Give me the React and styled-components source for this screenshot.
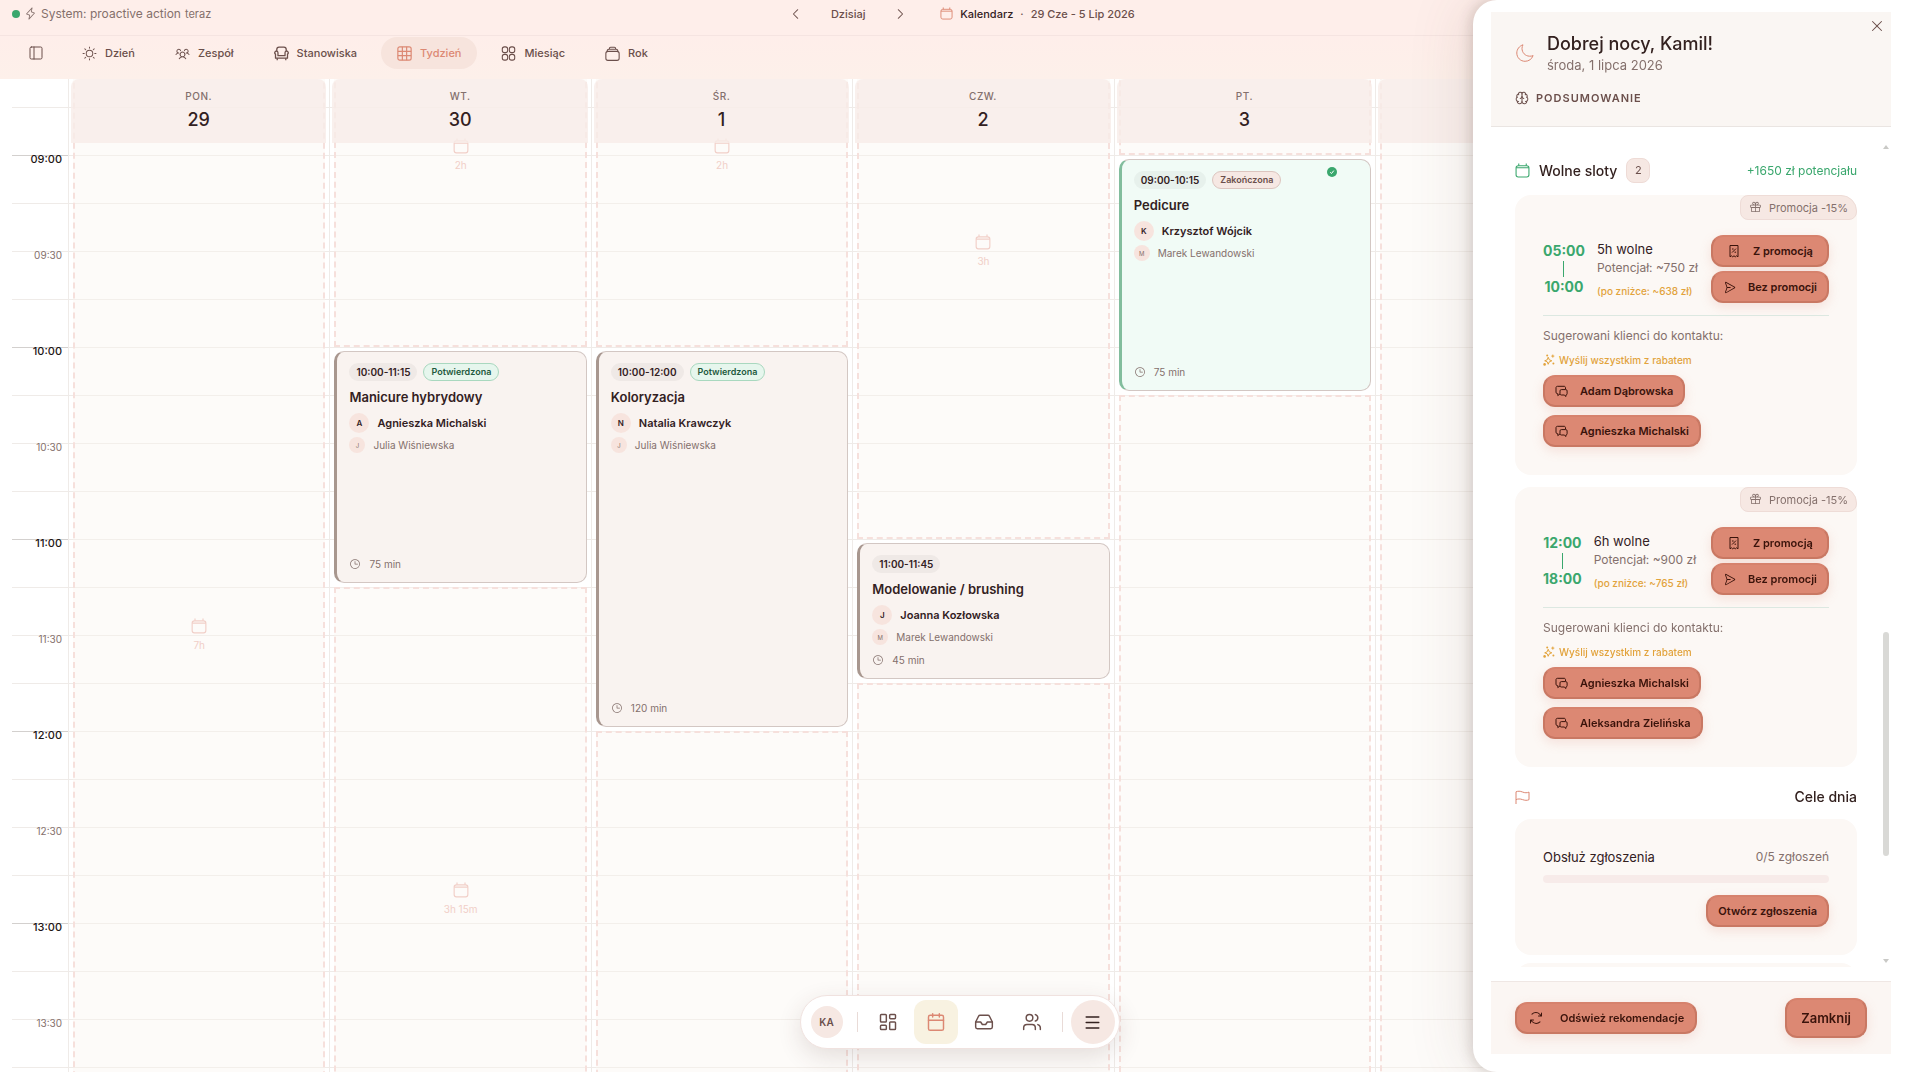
import React from 'react';
import styled, { createGlobalStyle, css } from 'styled-components';
import {
  PiArrowsClockwise,
  PiCaretLeft,
  PiCaretRight,
  PiClock,
  PiGift,
  PiLightning,
  PiPaperPlaneRight,
  PiSun,
  PiUsersThree,
  PiX,
} from 'react-icons/pi';
import {
  Brain,
  Calendar,
  Inbox,
  LayoutDashboard,
  Menu,
  PanelLeft,
  Users,
} from 'lucide-react';

const INK = '#33211f';
const BROWN = '#6b4f4b';
const MUTED = '#84706c';
const CORAL = '#dc8873';
const CORAL_EDGE = '#c97863';
const BLUSH = '#f6e8e3';
const GREEN = '#3aa76d';
const AMBER = '#e2a33c';
const LINE = '#efebe8';
const DASH = '#f6e0dc';

const HOUR = 192;
const DAY_START = 8;
const DAY_END = 14;

const days = [
  {
    name: 'PON.',
    number: 29,
    items: [{ free: '7h', hours: 7 }],
  },
  {
    name: 'WT.',
    number: 30,
    items: [
      { free: '2h', hours: 2 },
      {
        hours: 1.25,
        time: '10:00-11:15',
        status: 'Potwierdzona',
        title: 'Manicure hybrydowy',
        client: 'Agnieszka Michalski',
        staff: 'Julia Wiśniewska',
        duration: '75 min',
      },
      { free: '3h 15m', hours: 3.25 },
    ],
  },
  {
    name: 'ŚR.',
    number: 1,
    items: [
      { free: '2h', hours: 2 },
      {
        hours: 2,
        time: '10:00-12:00',
        status: 'Potwierdzona',
        title: 'Koloryzacja',
        client: 'Natalia Krawczyk',
        staff: 'Julia Wiśniewska',
        duration: '120 min',
      },
      { free: '6h', hours: 6 },
    ],
  },
  {
    name: 'CZW.',
    number: 2,
    items: [
      { free: '3h', hours: 3 },
      {
        hours: 0.75,
        time: '11:00-11:45',
        title: 'Modelowanie / brushing',
        client: 'Joanna Kozłowska',
        staff: 'Marek Lewandowski',
        duration: '45 min',
      },
      { free: '6h 15m', hours: 6.25 },
    ],
  },
  {
    name: 'PT.',
    number: 3,
    items: [
      { free: '1h', hours: 1 },
      {
        hours: 1.25,
        done: true,
        time: '09:00-10:15',
        status: 'Zakończona',
        title: 'Pedicure',
        client: 'Krzysztof Wójcik',
        staff: 'Marek Lewandowski',
        duration: '75 min',
      },
      { free: '7h 45m', hours: 7.75 },
    ],
  },
  { name: 'SOB.', number: 4, items: [{ free: '10h', hours: 10 }] },
  { name: 'NIEDZ.', number: 5, items: [{ free: '10h', hours: 10 }] },
];

const freeSlots = [
  {
    from: '05:00',
    to: '10:00',
    length: '5h wolne',
    potential: 'Potencjał: ~750 zł',
    discounted: '(po zniżce: ~638 zł)',
    clients: ['Adam Dąbrowska', 'Agnieszka Michalski'],
  },
  {
    from: '12:00',
    to: '18:00',
    length: '6h wolne',
    potential: 'Potencjał: ~900 zł',
    discounted: '(po zniżce: ~765 zł)',
    clients: ['Agnieszka Michalski', 'Aleksandra Zielińska'],
  },
];

const CalendarIcon = ({ size = 14 }) => (
  <svg width={size} height={size} viewBox="0 0 14 14" fill="none" stroke="currentColor">
    <rect x="1" y="2.5" width="12" height="10.5" rx="2" />
    <path d="M1 4.5h12M3.5.5v2M10.5.5v2" />
  </svg>
);

const StackIcon = () => (
  <svg viewBox="0 0 14 14" fill="none" stroke="currentColor">
    <rect x=".8" y="5" width="12.4" height="8.4" rx="2" />
    <path d="M2 5c0-1.500.5-2 1.500-2h7c1 0 1.500.5 1.500 2M4 3c0-1.300.5-1.800 1.300-1.800h3.400C9.500 1.200 10 1.700 10 3" />
  </svg>
);

const ArmchairIcon = () => (
  <svg viewBox="0 0 14 14" fill="none" stroke="currentColor" strokeWidth="1.2" strokeLinejoin="round">
    <path d="M2.600 5V3.200C2.600 1.800 3.400 1.100 4.700 1.100h4.600c1.300 0 2.100.7 2.100 2.100V5" />
    <path d="M3.700 9V6.400a1.500 1.500 0 1 0-2.300 1.200v3.800h11.200V7.600a1.500 1.500 0 1 0-2.300-1.200V9z" />
    <path d="M3 11.400v1.800M11 11.400v1.800" />
  </svg>
);

const GridIcon = () => (
  <svg viewBox="0 0 14 14" fill="none" stroke="currentColor" strokeWidth="1.100">
    <rect x=".8" y=".8" width="12.400" height="12.400" rx="1.800" />
    <path d="M.8 5h12.400M.8 9h12.400M5 .8v12.400M9 .8v12.400" />
  </svg>
);

const CloverIcon = () => (
  <svg viewBox="0 0 14 14" fill="none" stroke="currentColor">
    <rect x="1.200" y=".8" width="5" height="5.400" rx="2" />
    <rect x="7.800" y=".8" width="5" height="5.400" rx="2" />
    <rect x="1.200" y="7.800" width="5" height="5.400" rx="2" />
    <rect x="7.800" y="7.800" width="5" height="5.400" rx="2" />
  </svg>
);

const MoonIcon = () => (
  <svg width="20" height="20" viewBox="0 0 20 20" fill="none" stroke={CORAL} strokeLinejoin="round">
    <path d="M8 1.800C4.400 3 1.800 6.200 1.800 10c0 4.700 3.700 8.300 8.300 8.300 3.700 0 6.900-2.400 8-5.700-1.200.5-2.400.7-3.700.6C10.200 13 7 9.600 7 5.400c0-1.300.4-2.500 1-3.600z" />
  </svg>
);

const FlagIcon = () => (
  <svg width="15" height="15" viewBox="0 0 15 15" fill="none" stroke="currentColor" strokeLinejoin="round">
    <path d="M1 14V1.800c2-.8 4-.8 6.500.2s4.500 1 6.500.1v7.600c-2 .9-4 .8-6.500-.1S3 8.800 1 9.600" />
  </svg>
);

const ChatsIcon = () => (
  <svg width="13" height="13" viewBox="0 0 13 13" fill="none" stroke="currentColor" strokeLinejoin="round">
    <path d="M10.500 4V2.800c0-.9-.5-1.500-1.400-1.500H2.400C1.500 1.300 1 1.900 1 2.800v4.400c0 .9.500 1.400 1.400 1.400h.4v2L5 8.900" />
    <path d="M6.300 4.600h4.500c.8 0 1.300.5 1.300 1.300v2.800c0 .8-.5 1.300-1.200 1.300v1.500L9.200 10H6.300C5.500 10 5 9.500 5 8.700V5.900c0-.8.5-1.300 1.300-1.300z" />
  </svg>
);

const CouponIcon = () => (
  <svg width="14" height="14" viewBox="0 0 14 14" fill="none" stroke="currentColor">
    <path d="M3 1.5h8v11.3l-1.4-1-1.3 1-1.3-1-1.3 1-1.3-1-1.4 1z" strokeLinejoin="round" />
    <path d="M5.3 8.3l3.4-3.4M5.4 5h.8M7.9 8.2h.8" strokeLinecap="round" />
  </svg>
);

const SparkIcon = () => (
  <svg width="12" height="12" viewBox="0 0 12 12" fill="none" stroke="currentColor">
    <path
      d="M5.2 3.2 6.3 5.8 8.8 6.8 6.3 7.8 5.2 10.3 4.2 7.8 1.7 6.8 4.2 5.8z"
      strokeLinejoin="round"
    />
    <path d="M9.8.6v3M8.3 2.1h3" />
    <circle cx="1.6" cy="10.4" r="1.3" fill="currentColor" stroke="none" />
    <circle cx="10.4" cy="9.4" r="1" fill="currentColor" stroke="none" />
    <circle cx="4.2" cy="1.6" r="1" fill="currentColor" stroke="none" />
  </svg>
);

const CheckIcon = () => (
  <svg width="10" height="10" viewBox="0 0 10 10" fill="none">
    <circle cx="5" cy="5" r="5" fill={GREEN} />
    <path d="M3.2 5.3 4.5 6.5 6.8 3.6" stroke="#fff" />
  </svg>
);

const tabs = [
  { label: 'Dzień', icon: <PiSun /> },
  { label: 'Zespół', icon: <PiUsersThree /> },
  { label: 'Stanowiska', icon: <ArmchairIcon /> },
  { label: 'Tydzień', icon: <GridIcon />, active: true },
  { label: 'Miesiąc', icon: <CloverIcon /> },
  { label: 'Rok', icon: <StackIcon /> },
];

const DayItem = ({ item }) => {
  if (item.free) {
    return (
      <FreeSlot $hours={item.hours}>
        <CalendarIcon size={16} />
        <span>{item.free}</span>
      </FreeSlot>
    );
  }

  return (
    <EventBox $hours={item.hours}>
      <Event $done={item.done}>
        {item.done && (
          <DoneMark>
            <CheckIcon />
          </DoneMark>
        )}
        <Pills>
          <TimePill>{item.time}</TimePill>
          {item.status && <StatusPill $done={item.done}>{item.status}</StatusPill>}
        </Pills>
        <EventTitle>{item.title}</EventTitle>
        <Person $main>
          <Initial $main>{item.client[0]}</Initial>
          {item.client}
        </Person>
        <Person>
          <Initial>{item.staff[0]}</Initial>
          {item.staff}
        </Person>
        <Duration>
          <PiClock size={12} />
          {item.duration}
        </Duration>
      </Event>
    </EventBox>
  );
};

const Hours = () => {
  const cells = [];
  for (let hour = DAY_START; hour < DAY_END; hour += 1) {
    const label = String(hour).padStart(2, '0');
    cells.push(<HourCell key={hour} $full>{label}:00</HourCell>);
    cells.push(<HourCell key={`${hour}-half`}>{label}:30</HourCell>);
  }
  return <Gutter>{cells}</Gutter>;
};

const SlotCard = ({ slot }) => (
  <Card $slot>
    <Promo>
      <PiGift size={13} />
      Promocja -15%
    </Promo>
    <SlotRow>
      <SlotTimes>
        {slot.from}
        <TimeBar />
        {slot.to}
      </SlotTimes>
      <div>
        <SlotLength>{slot.length}</SlotLength>
        <SlotPotential>{slot.potential}</SlotPotential>
        <SlotDiscount>{slot.discounted}</SlotDiscount>
      </div>
      <SlotActions>
        <Action>
          <CouponIcon />
          Z promocją
        </Action>
        <Action>
          <PiPaperPlaneRight size={13} />
          Bez promocji
        </Action>
      </SlotActions>
    </SlotRow>
    <Suggested>
      <SuggestedTitle>Sugerowani klienci do kontaktu:</SuggestedTitle>
      <SendAll>
        <SparkIcon />
        Wyślij wszystkim z rabatem
      </SendAll>
      {slot.clients.map((client) => (
        <Action key={client}>
          <ChatsIcon />
          {client}
        </Action>
      ))}
    </Suggested>
  </Card>
);

const App = () => (
  <Page>
    <GlobalStyle />
    <TopBar>
      <Status>
        <Dot />
        <PiLightning size={13} />
        <span>System: proactive action</span>
        <small>teraz</small>
      </Status>
      <Period>
        <PlainButton aria-label="Poprzedni tydzień">
          <PiCaretLeft size={14} />
        </PlainButton>
        <Today>Dzisiaj</Today>
        <PlainButton aria-label="Następny tydzień">
          <PiCaretRight size={14} />
        </PlainButton>
        <PeriodLabel>
          <CalendarIcon size={13} />
          <strong>Kalendarz</strong>
          <span>·</span>
          <span>29 Cze - 5 Lip 2026</span>
        </PeriodLabel>
      </Period>
    </TopBar>
    <Tabs>
      <PanelButton aria-label="Panel boczny">
        <PanelLeft size={16} strokeWidth={1.5} />
      </PanelButton>
      {tabs.map((tab) => (
        <Tab key={tab.label} $active={tab.active}>
          {tab.icon}
          {tab.label}
        </Tab>
      ))}
    </Tabs>
    <Week>
      <Hours />
      {days.map((day) => (
        <Day key={day.name}>
          <DayHeader>
            <DayName>{day.name}</DayName>
            <DayNumber>{day.number}</DayNumber>
          </DayHeader>
          <Track>
            {day.items.map((item, index) => (
              <DayItem key={index} item={item} />
            ))}
          </Track>
        </Day>
      ))}
    </Week>

    <Dock>
      <DockButton aria-label="Konto">
        <Avatar>KA</Avatar>
      </DockButton>
      <DockDivider />
      <DockButton aria-label="Pulpit">
        <LayoutDashboard size={20} strokeWidth={1.75} />
      </DockButton>
      <DockButton aria-label="Kalendarz" $active>
        <Calendar size={20} strokeWidth={1.75} />
      </DockButton>
      <DockButton aria-label="Skrzynka">
        <Inbox size={20} strokeWidth={1.75} />
      </DockButton>
      <DockButton aria-label="Klienci">
        <Users size={20} strokeWidth={1.75} />
      </DockButton>
      <DockDivider />
      <DockButton aria-label="Menu" $round>
        <Menu size={19} strokeWidth={1.75} />
      </DockButton>
    </Dock>

    <Drawer>
      <DrawerHeader>
        <CloseButton aria-label="Zamknij panel">
          <PiX size={16} />
        </CloseButton>
        <Greeting>
          <MoonIcon />
          <div>
            <GreetingTitle>Dobrej nocy, Kamil!</GreetingTitle>
            <GreetingDate>środa, 1 lipca 2026</GreetingDate>
          </div>
        </Greeting>
        <SummaryTitle>
          <Brain size={14} strokeWidth={1.75} />
          PODSUMOWANIE
        </SummaryTitle>
      </DrawerHeader>
      <DrawerBody>
        <SectionHeader>
          <CalendarIcon size={15} />
          <SectionTitle>Wolne sloty</SectionTitle>
          <Count>2</Count>
          <Potential>+1650 zł potencjału</Potential>
        </SectionHeader>
        <SlotList>
          {freeSlots.map((slot) => (
            <SlotCard key={slot.from} slot={slot} />
          ))}
        </SlotList>
        <GoalsHeader>
          <FlagIcon />
          <SectionTitle>Cele dnia</SectionTitle>
        </GoalsHeader>
        <GoalList>
          <Card>
            <GoalRow>
              <GoalName>Obsłuż zgłoszenia</GoalName>
              <GoalValue>0/5 zgłoszeń</GoalValue>
            </GoalRow>
            <GoalBar />
            <GoalAction>Otwórz zgłoszenia</GoalAction>
          </Card>
          <Card />
        </GoalList>
        <ScrollTrack>
          <ScrollArrow viewBox="0 0 6 4">
            <path d="M3 0 6 4H0z" />
          </ScrollArrow>
          <ScrollThumb />
          <ScrollArrow viewBox="0 0 6 4">
            <path d="M3 4 6 0H0z" />
          </ScrollArrow>
        </ScrollTrack>
      </DrawerBody>
      <DrawerFooter>
        <Action $wide>
          <PiArrowsClockwise size={16} />
          Odśwież rekomendacje
        </Action>
        <CloseAction>Zamknij</CloseAction>
      </DrawerFooter>
    </Drawer>
  </Page>
);

const GlobalStyle = createGlobalStyle`
  * {
    box-sizing: border-box;
  }

  body {
    margin: 0;
    background: #fff;
    color: ${INK};
    font-family: Inter, 'Open Sans', sans-serif;
    font-size: 12px;
  }

  button {
    padding: 0;
    border: 0;
    background: none;
    color: inherit;
    font: inherit;
    cursor: pointer;
  }

  svg {
    flex: none;
  }

  h1, h2, h3, p {
    margin: 0;
  }
`;

const Page = styled.div`
  display: flex;
  flex-direction: column;
  height: 100vh;
  overflow: hidden;
`;

const TopBar = styled.header`
  display: grid;
  grid-template-columns: 1fr auto 1fr;
  align-items: center;
  flex: none;
  height: 36px;
  padding: 0 12px 8px;
  border-bottom: 1px solid #f5e4e1;
  background: #feeeea;
  color: ${BROWN};
`;

const Status = styled.div`
  display: flex;
  align-items: center;
  gap: 4px;
  color: ${MUTED};

  small {
    font-size: 11px;
  }
`;

const Dot = styled.span`
  width: 8px;
  height: 8px;
  border-radius: 50%;
  background: ${GREEN};
`;

const Period = styled.div`
  display: flex;
  align-items: center;
  font-size: 11px;
  font-weight: 500;
`;

const PlainButton = styled.button`
  display: grid;
  place-items: center;
  width: 24px;
  height: 24px;
`;

const Today = styled.button`
  width: 80px;
`;

const PeriodLabel = styled.div`
  display: flex;
  align-items: center;
  gap: 7px;
  margin-left: 28px;

  svg {
    color: ${CORAL};
  }

  strong {
    color: ${INK};
    font-weight: 500;
  }
`;

const Tabs = styled.nav`
  display: flex;
  align-items: flex-start;
  gap: 8px;
  flex: none;
  height: 43px;
  padding: 1px 20px 0;
  background: linear-gradient(#feeeea, #fdf0ea);
`;

const PanelButton = styled.button`
  display: grid;
  place-items: center;
  width: 32px;
  height: 32px;
  margin-right: 6px;
  color: ${BROWN};
`;

const Tab = styled.button`
  display: flex;
  align-items: center;
  gap: 8px;
  height: 32px;
  padding: 0 16px;
  border-radius: 16px;
  color: ${({ $active }) => ($active ? CORAL : BROWN)};
  background: ${({ $active }) => ($active ? '#f7e4dd' : 'none')};
  font-size: 11px;
  font-weight: 500;

  svg {
    width: 15px;
    height: 15px;
  }
`;

const gridLines = css`
  background-image: repeating-linear-gradient(
    ${LINE} 0 1px,
    transparent 1px 48px
  );
`;

const Week = styled.main`
  display: grid;
  grid-template-columns: 57px repeat(7, minmax(0, 1fr));
  flex: 1;
  min-height: 0;
  padding: 0 20px 0 12px;
  overflow: hidden;
`;

const Gutter = styled.div`
  margin-top: -116px;
  border-right: 1px solid ${LINE};
  ${gridLines}
`;

const HourCell = styled.div`
  height: ${HOUR / 2}px;
  padding-right: 6px;
  border-top: 1px solid ${({ $full }) => ($full ? '#d3d0ce' : LINE)};
  color: ${({ $full }) => ($full ? '#1d1514' : MUTED)};
  font-size: ${({ $full }) => ($full ? 11 : 10)}px;
  font-weight: ${({ $full }) => ($full ? 500 : 400)};
  line-height: 7px;
  text-align: right;
`;

const Day = styled.section`
  display: grid;
  align-items: start;
  border-right: 1px solid ${LINE};
`;

const DayHeader = styled.div`
  z-index: 1;
  grid-area: 1 / 1;
  height: 64px;
  margin: 0 3px 0 2px;
  padding-top: 10px;
  border-radius: 8px 8px 0 0;
  background: rgba(248, 236, 233, 0.8);
  text-align: center;
`;

const DayName = styled.div`
  color: ${MUTED};
  font-size: 10px;
  font-weight: 500;
  line-height: 15px;
  letter-spacing: 0.5px;
`;

const DayNumber = styled.div`
  font-size: 18px;
  font-weight: 500;
  line-height: 32px;
`;

const Track = styled.div`
  grid-area: 1 / 1;
  min-width: 0;
  margin-top: -116px;
  padding: 0 4px;
  ${gridLines}
`;

const FreeSlot = styled.div`
  display: flex;
  flex-direction: column;
  align-items: center;
  justify-content: center;
  gap: 4px;
  height: ${({ $hours }) => $hours * HOUR}px;
  border: 2px dashed ${DASH};
  background: rgba(250, 245, 240, 0.4);
  color: #f1cfc8;
  font-size: 10px;
  line-height: 14px;
`;

const EventBox = styled.div`
  height: ${({ $hours }) => $hours * HOUR}px;
  padding: 4px 0;
`;

const Event = styled.article`
  position: relative;
  display: flex;
  flex-direction: column;
  height: 100%;
  padding: 11px 12px;
  border: 1px solid #d3c7c3;
  border-left: 3px solid ${({ $done }) => ($done ? '#82bd9d' : '#a8978f')};
  border-radius: 10px;
  background: ${({ $done }) => ($done ? '#f1fbf6' : '#f9f3f0')};
`;

const DoneMark = styled.span`
  position: absolute;
  top: 7px;
  right: 33px;
  display: flex;
`;

const Pills = styled.div`
  display: flex;
  gap: 6px;
`;

const pill = css`
  height: 18px;
  padding: 0 7px;
  border-radius: 9px;
  line-height: 18px;
`;

const TimePill = styled.span`
  ${pill}
  background: rgba(90, 90, 80, 0.06);
  font-size: 10px;
  font-weight: 600;
`;

const StatusPill = styled.span`
  ${pill}
  border: 1px solid ${({ $done }) => ($done ? '#dcc5bf' : '#a9d8bf')};
  background: ${({ $done }) => ($done ? BLUSH : '#e6f6ed')};
  color: ${({ $done }) => ($done ? BROWN : '#1f5a3d')};
  font-size: 9px;
  font-weight: 600;
  line-height: 16px;
`;

const EventTitle = styled.h3`
  margin: 6px 0;
  font-size: 13px;
  font-weight: 600;
  line-height: 20px;
`;

const Person = styled.div`
  display: flex;
  align-items: center;
  gap: 8px;
  margin-bottom: 4px;
  color: ${({ $main }) => ($main ? INK : MUTED)};
  font-size: ${({ $main }) => ($main ? 11 : 10)}px;
  font-weight: ${({ $main }) => ($main ? 600 : 400)};
`;

const Initial = styled.span`
  display: grid;
  place-items: center;
  width: ${({ $main }) => ($main ? 20 : 16)}px;
  height: ${({ $main }) => ($main ? 20 : 16)}px;
  border-radius: 50%;
  background: #f7e4de;
  font-size: ${({ $main }) => ($main ? 8 : 6)}px;
`;

const Duration = styled.div`
  display: flex;
  align-items: center;
  gap: 8px;
  margin-top: auto;
  color: ${MUTED};
  font-size: 10px;
  line-height: 14px;
`;

const Dock = styled.nav`
  position: fixed;
  bottom: 23px;
  left: 50%;
  display: flex;
  align-items: center;
  gap: 4px;
  padding: 4px;
  border: 1px solid #f0e2df;
  border-radius: 27px;
  background: #fff;
  box-shadow: 0 8px 24px rgba(80, 50, 40, 0.14);
  transform: translateX(-50%);
`;

const DockButton = styled.button`
  display: grid;
  place-items: center;
  width: 44px;
  height: 44px;
  border-radius: ${({ $round }) => ($round ? 22 : 12)}px;
  background: ${({ $active, $round }) => ($active ? '#f8f2e1' : $round ? BLUSH : 'none')};
  color: ${({ $active, $round }) => ($active ? CORAL : $round ? INK : BROWN)};
`;

const Avatar = styled.span`
  width: 32px;
  height: 32px;
  border-radius: 50%;
  background: ${BLUSH};
  color: ${BROWN};
  font-size: 10px;
  font-weight: 600;
  line-height: 32px;
`;

const DockDivider = styled.span`
  width: 1px;
  height: 20px;
  margin: 0 4px;
  background: #e9dbd7;
`;

const Drawer = styled.aside`
  position: fixed;
  top: 0;
  right: 0;
  bottom: 0;
  z-index: 2;
  display: flex;
  flex-direction: column;
  width: 446px;
  padding: 12px 28px 18px 18px;
  border-radius: 24px 0 0 24px;
  background: #fff;
  box-shadow: -2px 0 14px rgba(70, 50, 45, 0.2), -8px 0 60px rgba(110, 70, 60, 0.12);
`;

const DrawerHeader = styled.header`
  position: relative;
  flex: none;
  padding: 20px 24px;
  border-bottom: 1px solid #eae5e2;
  background: #faf6f3;
`;

const CloseButton = styled.button`
  position: absolute;
  top: 6px;
  right: 6px;
  display: flex;
  color: ${BROWN};
`;

const Greeting = styled.div`
  display: flex;
  align-items: center;
  gap: 12px;
`;

const GreetingTitle = styled.h1`
  font-size: 18px;
  font-weight: 500;
  line-height: 24px;
`;

const GreetingDate = styled.p`
  color: ${MUTED};
  font-size: 13px;
  line-height: 18px;
`;

const SummaryTitle = styled.h2`
  display: flex;
  align-items: center;
  gap: 7px;
  margin-top: 16px;
  color: ${BROWN};
  font-size: 11px;
  font-weight: 600;
  line-height: 16px;
  letter-spacing: 1px;
`;

const DrawerBody = styled.div`
  position: relative;
  flex: 1;
  min-height: 0;
  margin-bottom: 14px;
  padding: 31px 34px 0 24px;
  overflow: hidden;
`;

const SectionHeader = styled.div`
  display: flex;
  align-items: center;
  gap: 9px;
  height: 25px;
  margin-bottom: 12px;
  color: ${GREEN};
`;

const SectionTitle = styled.h2`
  color: ${INK};
  font-size: 14px;
  font-weight: 500;
  line-height: 20px;
`;

const Count = styled.span`
  width: 24px;
  height: 25px;
  border: 1px solid #eedbd6;
  border-radius: 8px;
  background: ${BLUSH};
  color: ${BROWN};
  font-size: 11px;
  line-height: 23px;
  text-align: center;
`;

const Potential = styled.span`
  margin-left: auto;
  font-size: 12px;
`;

const SlotList = styled.div`
  display: grid;
  gap: 12px;
`;

const Card = styled.article`
  position: relative;
  display: flex;
  flex-direction: column;
  min-height: 56px;
  padding: ${({ $slot }) => ($slot ? '40px 28px 28px' : '28px')};
  border-radius: 16px;
  background: #fcf8f5;
`;

const Promo = styled.span`
  position: absolute;
  top: 0;
  right: 0;
  display: flex;
  align-items: center;
  gap: 7px;
  height: 25px;
  padding: 0 8px;
  border: 1px solid #eedcd7;
  border-radius: 8px 16px 8px 8px;
  background: ${BLUSH};
  color: ${MUTED};
  font-size: 11px;
`;

const SlotRow = styled.div`
  display: flex;
  align-items: center;
  gap: 12px;
`;

const SlotTimes = styled.div`
  display: flex;
  flex-direction: column;
  align-items: center;
  color: ${GREEN};
  font-size: 14px;
  font-weight: 700;
  line-height: 20px;
`;

const TimeBar = styled.span`
  width: 1px;
  height: 16px;
  background: ${GREEN};
`;

const SlotLength = styled.p`
  font-size: 13px;
  line-height: 20px;
`;

const SlotPotential = styled.p`
  color: ${MUTED};
  font-size: 12px;
  line-height: 18px;
  white-space: nowrap;
`;

const SlotDiscount = styled.p`
  margin-top: 6px;
  color: ${AMBER};
  font-size: 10px;
  font-weight: 500;
  line-height: 16px;
  white-space: nowrap;
`;

const SlotActions = styled.div`
  display: grid;
  gap: 4px;
  margin-left: auto;
`;

const Action = styled.button`
  display: flex;
  align-items: center;
  justify-content: center;
  gap: 12px;
  height: 32px;
  padding: 0 10px;
  border: 2px solid ${CORAL_EDGE};
  border-top-color: #d6826d;
  border-radius: 12px;
  background: ${CORAL};
  box-shadow: 0 4px 12px rgba(220, 136, 115, 0.2);
  color: #3a130b;
  font-size: 11px;
  font-weight: 600;
  white-space: nowrap;

  ${({ $wide }) => $wide && css`
    gap: 16px;
    padding: 0 11px;
  `}
`;

const Suggested = styled.div`
  display: flex;
  flex-direction: column;
  align-items: flex-start;
  gap: 8px;
  margin-top: 12px;
  padding-top: 11px;
  border-top: 1px solid #dce8e1;
`;

const SuggestedTitle = styled.p`
  color: ${MUTED};
  font-size: 12px;
  line-height: 18px;
`;

const SendAll = styled.button`
  display: flex;
  align-items: center;
  gap: 4px;
  height: 14px;
  color: ${AMBER};
  font-size: 10px;
  font-weight: 500;
`;

const GoalsHeader = styled.div`
  display: flex;
  align-items: center;
  justify-content: space-between;
  margin: 20px 0 12px;
  color: ${CORAL};
`;

const GoalList = styled.div`
  display: grid;
  gap: 8px;
`;

const GoalRow = styled.div`
  display: flex;
  align-items: center;
  justify-content: space-between;
  line-height: 20px;
`;

const GoalName = styled.span`
  font-size: 13px;
`;

const GoalValue = styled.span`
  color: ${MUTED};
  font-size: 12px;
`;

const GoalBar = styled.div`
  height: 8px;
  margin: 8px 0 12px;
  border-radius: 4px;
  background: #f7ebe9;
`;

const GoalAction = styled(Action)`
  align-self: flex-end;
`;

const ScrollTrack = styled.div`
  position: absolute;
  top: 18px;
  right: 2px;
  bottom: 4px;
  display: grid;
  grid-template-rows: 4px 480fr 223fr 102fr 4px;
  width: 6px;
`;

const ScrollArrow = styled.svg`
  width: 6px;
  height: 4px;
  fill: #c9c9c6;

  &:last-child {
    grid-row: 5;
  }
`;

const ScrollThumb = styled.span`
  grid-row: 3;
  border-radius: 3px;
  background: #d9d9d6;
`;

const DrawerFooter = styled.footer`
  display: flex;
  align-items: center;
  justify-content: space-between;
  flex: none;
  padding: 16px 24px;
  border-top: 1px solid #efe7e4;
  background: #fbf6f3;
`;

const CloseAction = styled(Action)`
  height: 40px;
  padding: 0 14px;
  font-size: 13px;
`;

export default App;
